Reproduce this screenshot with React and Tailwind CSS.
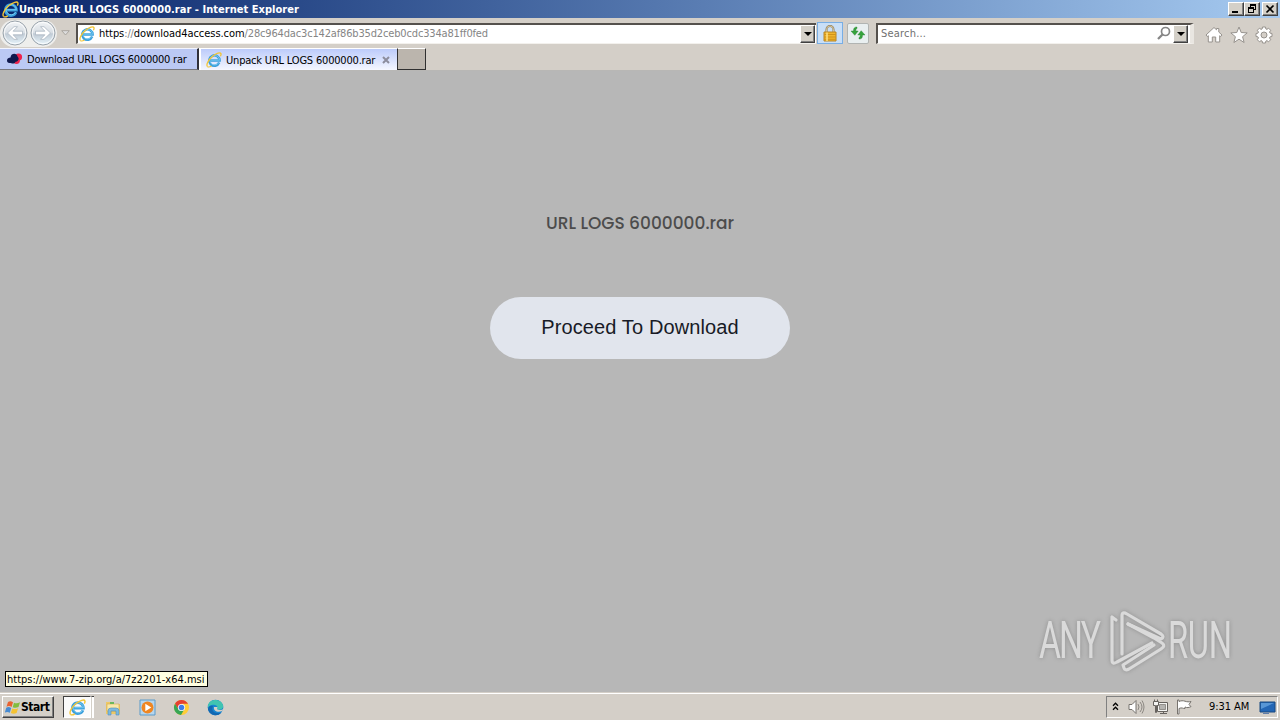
import { useId } from 'react';

const ui = "font-['Tahoma','DejaVu_Sans_Condensed','DejaVu_Sans',sans-serif]";
const raised = 'border border-t-white border-l-white border-r-[#404040] border-b-[#404040] bg-[#d4d0c8] shadow-[inset_-1px_-1px_0_#808080]';

function IeIcon({ size = 16 }) {
  return (
    <svg width={size} height={size} viewBox="0 0 16 16" fill="none" className="shrink-0">
      <path d="M13.2 10.6A5.2 5.2 0 1 1 13.6 8.6H4.5" stroke="#3b9fdc" strokeWidth="2.5" />
      <path d="M12.8 10.7A4.8 4.8 0 1 1 13.5 8.2H5" stroke="#7fd0f3" strokeWidth=".8" />
      <path d="M1.5 14.6C-.3 12.6 2.6 7.6 6.6 4.3 10.4 1.2 14.4 0 15 1.8c.2.7-.1 1.6-.6 2.5" stroke="#f3c535" strokeWidth="1.3" />
      <path d="M1.5 14.6c.9.8 2.5.3 4-.6" stroke="#f3c535" strokeWidth="1.2" />
    </svg>
  );
}

function NavButton({ back }) {
  const id = useId();
  return (
    <svg width="26" height="26" viewBox="0 0 26 26" className="shrink-0">
      <defs>
        <linearGradient id={id} x2="0" y2="1">
          <stop stopColor="#f3f5f7" />
          <stop offset=".48" stopColor="#d8dee4" />
          <stop offset=".54" stopColor="#c0cbd5" />
          <stop offset="1" stopColor="#e8f5fc" />
        </linearGradient>
      </defs>
      <circle cx="13" cy="13" r="12" fill={`url(#${id})`} stroke="#9ba4ac" />
      <circle cx="13" cy="13" r="10.7" fill="none" stroke="#fff" strokeOpacity=".8" />
      <path
        d="M5.5 13l6.5-6.3h3.5l-4.4 4.5h9.4v3.6h-9.4l4.4 4.5H12z"
        transform={back ? undefined : 'rotate(180 13 13)'}
        fill="#fff"
        stroke="#a3afbc"
        strokeWidth=".7"
      />
    </svg>
  );
}

function DropButton() {
  return (
    <div className={`flex h-[18px] w-[15px] shrink-0 items-center justify-center ${raised}`}>
      <svg width="8" height="4" viewBox="0 0 8 4"><path d="M0 0h8L4 4z" fill="#000" /></svg>
    </div>
  );
}

function WindowButton({ children }) {
  return (
    <div className={`flex h-[14px] w-4 items-center justify-center ${raised}`}>
      <svg width="12" height="10" viewBox="0 0 12 10" fill="none" stroke="#000" shapeRendering="crispEdges">
        {children}
      </svg>
    </div>
  );
}

function TitleBar() {
  return (
    <div className="flex h-[18px] items-center bg-gradient-to-r from-[#0a246a] to-[#a6caf0] px-[2px]">
      <IeIcon size={17} />
      <span className="w-[300px] whitespace-nowrap pt-px text-[11px] font-bold leading-[17px] tracking-[0.03px] text-white">
        Unpack URL LOGS 6000000.rar - Internet Explorer
      </span>
      <div className="ml-auto flex">
        <WindowButton><path d="M2 8h6" strokeWidth="2" /></WindowButton>
        <WindowButton>
          <path d="M4 1h6M4.5 1v3M9.5 1v5M8 5.5h2M2 4h6M4 .5h6M2 3.5h6M2.5 4v5M7.5 4v5M2 8.5h6" />
        </WindowButton>
        <div className="ml-[2px]">
          <WindowButton><path d="M2.5 1.5l7 7M9.5 1.5l-7 7" strokeWidth="1.7" shapeRendering="auto" /></WindowButton>
        </div>
      </div>
    </div>
  );
}

function AddressRow() {
  return (
    <div className="flex h-[30px] items-center bg-[#d4cfc8]">
      <div className="flex h-[27px] w-[57px] items-center gap-[2px] rounded-full bg-[#eeeeec] pl-[2px]">
        <NavButton back />
        <NavButton />
      </div>
      <svg width="9" height="6" viewBox="0 0 9 6" className="ml-1"><path d="M.7.7h7.6L4.5 5z" fill="#ddd" stroke="#aaa69f" /></svg>
      <div className="ml-[6px] flex h-[21px] w-[740px] items-center border-b border-l-2 border-t-2 border-[#55514d] border-b-[#f3f1ed] bg-white pl-px">
        <IeIcon size={16} />
        <span className="ml-1 whitespace-nowrap pt-px text-[11px] tracking-[-0.16px] text-[#858585]">
          <span className="tracking-[-0.05px] text-black">https</span>://<span className="tracking-[-0.05px] text-black">download4access.com</span>/28c964dac3c142af86b35d2ceb0cdc334a81ff0fed
        </span>
        <div className="ml-auto mr-px"><DropButton /></div>
      </div>
      <div className="ml-[1px] flex h-[22px] w-[26px] items-center justify-center border border-[#78aee5] bg-[#c9dff7]">
        <svg width="14" height="17" viewBox="0 0 14 17">
          <path d="M3.5 8V4.5a3.5 3.5 0 0 1 7 0V8" fill="none" stroke="#8e7b55" strokeWidth="2" />
          <path d="M3.5 8V4.5a3.5 3.5 0 0 1 7 0V8" fill="none" stroke="#e5d6ad" strokeWidth=".8" />
          <path d="M1 7h12v9H1z" fill="#f0b52d" stroke="#b88422" />
          <path d="M1.5 9.5h11M1.5 12h11M1.5 14.3h11" stroke="#c88914" strokeWidth=".8" />
          <path d="M4 7.5V16" stroke="#ffe183" strokeWidth="1.5" />
        </svg>
      </div>
      <div className="ml-1 flex h-[21px] w-[22px] items-center justify-center rounded-[2px] border border-[#b1b4b2] bg-[#e9eff0]">
        <svg width="16" height="14" viewBox="0 0 16 14" fill="#36a33c" stroke="#248130" strokeWidth=".4">
          <path d="M7 1C4.5 1 3.5 2 3.5 5H1l3.8 4.3L8.2 5H5.8c0-1.6.3-2.2 1.2-2.5zM9 13c2.5 0 3.5-1 3.5-4H15l-3.8-4.3L7.8 9h2.4c0 1.6-.3 2.2-1.2 2.5z" />
        </svg>
      </div>
      <div className="ml-[7px] flex h-[21px] w-[318px] items-center border-b border-l-2 border-r-4 border-t-2 border-[#55514d] border-b-[#f3f1ed] border-r-[#e9e6e1] bg-white pl-[3px]">
        <span className="pt-px text-[11px] tracking-[0.2px] text-[#707070]">Search...</span>
        <svg width="14" height="15" viewBox="0 0 14 15" fill="none" className="ml-auto mr-[2px]" stroke="#858585">
          <circle cx="8.5" cy="5.5" r="4" strokeWidth="1.7" />
          <path d="M5.5 8.5L1 13" strokeWidth="2.3" />
        </svg>
        <DropButton />
        <div className="w-[2px]" />
      </div>
      <div className="ml-[11px] flex gap-[7px] pt-1">
        <svg width="18" height="18" viewBox="0 0 18 18" fill="#fff" stroke="#96928d" strokeLinejoin="round">
          <path d="M1 9l8-7.5 2.5 2.3V2.5h2.3v3.6L17 9l-1.3 1.5-1-.8V16h-4v-5H7.3v5h-4V9.7l-1 .8z" />
        </svg>
        <svg width="18" height="18" viewBox="0 0 18 18" fill="#fff" stroke="#96928d" strokeLinejoin="round">
          <path d="M9 1l2.2 5.5 6 .4-4.6 3.8 1.5 5.8L9 13.2l-5.1 3.3 1.5-5.8L.8 6.9l6-.4z" />
        </svg>
        <svg width="18" height="18" viewBox="0 0 18 18" fill="#fff" stroke="#96928d" strokeLinejoin="round">
          <path fillRule="evenodd" d="M7.5 1h3l.4 2 1 .4 1.7-1.2 2.1 2.1-1.2 1.8.5 1 2 .4v3l-2 .4-.5 1 1.2 1.8-2.1 2.1-1.7-1.2-1 .4-.4 2h-3l-.4-2-1-.4-1.7 1.2-2.1-2.1 1.2-1.8-.5-1-2-.4v-3l2-.4.5-1-1.2-1.8 2.1-2.1 1.7 1.2 1-.4zM9 6a3 3 0 1 0 0 6 3 3 0 0 0 0-6z" />
        </svg>
      </div>
    </div>
  );
}

function Tabs() {
  return (
    <div className="flex h-[23px] border-b border-[#b8b7b5] bg-[#d4cfc8]">
      <div className="flex h-[22px] w-[199px] items-center border-b border-r-2 border-t border-b-[#77777d] border-r-[#303038] border-t-[#f3f5ff] bg-[#bbc9f4] pl-[6px] text-[11px]">
        <svg width="17" height="12" viewBox="0 0 17 12">
          <circle cx="12.5" cy="4" r="3.6" fill="#ed234b" />
          <circle cx="10.5" cy="7.5" r="3.4" fill="#ed234b" />
          <path d="M1 7.5C1 5 3 4.5 4.5 4.4 5-.1 11-.2 11.5 3.5 14 5.7 12 9 9.5 8.7 8 12 4.8 9.7 4 10 2 10.3 1 9 1 7.5z" fill="#10194d" />
        </svg>
        <span className="ml-1 whitespace-nowrap pt-[3px] tracking-[-0.24px]">Download URL LOGS 6000000 rar</span>
      </div>
      <div className="flex h-[22px] w-[198px] items-center border-l-2 border-t border-white bg-gradient-to-b from-[#bccbfa] to-[#f5f7ff] pl-[5px] text-[11px]">
        <IeIcon />
        <span className="ml-1 whitespace-nowrap pt-[3px] tracking-[-0.19px]">Unpack URL LOGS 6000000.rar</span>
        <svg width="8" height="8" viewBox="0 0 8 8" className="ml-auto mr-[7px]"><path d="M1 1l6 6M7 1L1 7" stroke="#8c8d9d" strokeWidth="2" /></svg>
      </div>
      <div className="h-[22px] w-[29px] border border-b-[#303030] border-l-[#303030] border-r-[#303030] border-t-white bg-[#bbb5ad]" />
    </div>
  );
}

function Watermark() {
  return (
    <svg width="208" height="66" viewBox="0 0 208 66" className="absolute bottom-[18px] right-[36px] overflow-visible drop-shadow-[0_0_2px_rgba(80,80,80,0.4)]">
      <g fill="#dadada" fontFamily="Roboto, sans-serif" fontSize="51" fontWeight="400">
        <text transform="translate(3 50) scale(.66 1)" textLength="94">ANY</text>
        <text transform="translate(132 50) scale(.64 1)" textLength="100">RUN</text>
      </g>
      <g fill="none" stroke="#dadada" strokeWidth="3.2" strokeLinejoin="round" strokeLinecap="round">
        <path d="M80 12l-4-3v43q0 5 5 2l35-19" />
        <path d="M86 46V8q0-5 5-2l34 20q4 3 0 5L92 16" />
        <path d="M88 60q1 3 5 1l32-20q5-3 1-6l-8-5-26-14M88 60l-1-3 31-20" />
      </g>
    </svg>
  );
}

function Page() {
  return (
    <main className="relative flex h-[621px] flex-col items-center bg-[#b7b7b7]">
      <h1 className="mt-[139px] whitespace-nowrap font-['Poppins','Inter',sans-serif] text-[17px] font-medium leading-[26px] text-[#4c4c4c]">
        URL LOGS 6000000.rar
      </h1>
      <button className="mt-[61px] h-[62px] w-[300px] rounded-full bg-[#e1e5ed] pb-[2px] font-['Liberation_Sans',sans-serif] text-[20px] tracking-[0.12px] text-[#181b26]">
        Proceed To Download
      </button>
      <Watermark />
      <div className="absolute bottom-[5px] left-[5px] h-4 w-[203px] whitespace-nowrap border border-black bg-[#ffffe1] pl-px text-[11px] leading-[15px]">
        https://www.7-zip.org/a/7z2201-x64.msi
      </div>
    </main>
  );
}

function StartButton() {
  return (
    <div className={`flex h-[22px] w-[52px] items-center pl-[2px] ${raised}`}>
      <svg width="16" height="15" viewBox="0 0 16 15">
        <path d="M3 2c2-1.3 3.4-.7 5 .2L6.6 7C5 6 3.5 5.7 1.5 6.8z" fill="#e96331" />
        <path d="M9 2.7c2 .8 3.6.8 6-.4l-1.5 4.8c-2 1-3.8 1-5.8.1z" fill="#83bd3f" />
        <path d="M1.2 7.8c2-1.2 3.4-.7 5 .2l-1.4 4.8c-1.7-1-3-1.3-5-.2z" fill="#478bd2" />
        <path d="M7.3 8.5c2 .8 3.6.8 5.8-.3l-1.5 4.7c-2 1-3.8 1-5.8.1z" fill="#f5c332" />
      </svg>
      <span className="text-[12px] font-bold tracking-[-0.45px]">Start</span>
    </div>
  );
}

function Tray() {
  return (
    <div className="ml-auto flex h-[22px] w-[172px] items-center border border-b-white border-l-[#808080] border-r-white border-t-[#808080] pl-[5px]">
      <svg width="7" height="9" viewBox="0 0 7 9" fill="none" stroke="#000" strokeWidth="1.3" className="mb-[2px]"><path d="M1 3.7l2.5-2.5L6 3.7M1 7.7l2.5-2.5L6 7.7" /></svg>
      <svg width="17" height="16" viewBox="0 0 17 16" fill="#fff" stroke="#77736e" className="ml-[9px]">
        <path d="M1 5.5h3l4-4v13l-4-4H1z" />
        <path d="M10 5q2 3 0 6M12 3q4 5 0 10M14 1.5q4 6.5 0 13" fill="none" strokeWidth=".8" />
      </svg>
      <svg width="17" height="16" viewBox="0 0 17 16" fill="#f4f4f2" stroke="#66625e" className="ml-[7px]">
        <path d="M5.5 3.5h10v9h-10zM8 14.5h7M11.5 12.5v2" />
        <path d="M7.5 5.5h6v5h-6z" fill="#b5b4b1" strokeWidth=".6" />
        <path d="M1.5 2.5h5v4h-2v7h-1v-7h-2zM2.5.5v2M5.5.5v2" />
      </svg>
      <svg width="17" height="16" viewBox="0 0 17 16" fill="#fff" stroke="#77736e" className="ml-[7px]">
        <path d="M1.5 1v14H3V9.5c3-1.5 4 .3 6 0V8c2 1 4 .6 6-.4L13 5.5l2-3c-2 .5-4 .4-6-.3-2-.7-4-.6-6 .3V1z" />
      </svg>
      <span className="ml-4 whitespace-nowrap pt-px text-[11px] tracking-[-0.05px]">9:31 AM</span>
      <svg width="17" height="15" viewBox="0 0 17 15" className="ml-auto mr-[1px] mt-px">
        <path d="M1 2h15v10H1z" fill="#2366b5" stroke="#194880" />
        <path d="M2 3h13L2 9z" fill="#5796d6" />
        <path d="M4 13.5h6" stroke="#5f7eaa" />
      </svg>
    </div>
  );
}

function Taskbar() {
  return (
    <div className="flex h-7 items-start border-t border-[#d4cfc8] bg-[#d4cfc8] px-[2px] pt-[3px] shadow-[inset_0_1px_0_#fff]">
      <StartButton />
      <div className="ml-[9px] flex h-[22px] w-7 items-center justify-center border border-b-white border-l-[#404040] border-r-white border-t-[#404040] bg-[#fafafa]">
        <IeIcon size={17} />
      </div>
      <div className="h-[22px] w-[3px] border-l border-t border-l-[#d4d0c8] border-t-[#404040] bg-white" />
      <div className="ml-[11px] flex h-[22px] items-center gap-[17px]">
        <svg width="17" height="17" viewBox="0 0 17 17">
          <path d="M1 3h6l1 2h7v10H1z" fill="#eec965" />
          <path d="M2 5h12v7H2z" fill="#f8e8a8" stroke="#d1aa55" strokeWidth=".6" />
          <path d="M5 3h4v2H5z" fill="#6bb85c" />
          <path d="M3 16v-4q0-3 3-3h5q3 0 3 3v4h-3v-4H6v4z" fill="#7cb9df" stroke="#538eb8" strokeWidth=".6" />
        </svg>
        <svg width="17" height="17" viewBox="0 0 17 17">
          <path d="M1 1h15v15H1z" fill="#b7d6ed" stroke="#5b9bca" />
          <circle cx="8.5" cy="8.5" r="6" fill="#ef8622" />
          <path d="M6.3 4.8l6 3.7-6 3.7z" fill="#fff" />
        </svg>
        <svg width="17" height="17" viewBox="0 0 17 17">
          <circle cx="8.5" cy="8.5" r="7.5" fill="#ffcd38" />
          <path d="M2 4.7A7.5 7.5 0 0 1 15 4.8H8.5L5.3 10.5z" fill="#e54132" />
          <path d="M2 4.7a7.5 7.5 0 0 0 6 11.3l3.4-5.8-5.8.4z" fill="#37a655" />
          <circle cx="8.5" cy="8.5" r="3.6" fill="#fff" />
          <circle cx="8.5" cy="8.5" r="2.8" fill="#3e7de8" />
        </svg>
        <svg width="17" height="17" viewBox="0 0 17 17">
          <circle cx="8.5" cy="8.5" r="7.8" fill="#1684d0" />
          <path d="M1 7C1.4-1.2 15.5-1 16.2 7.3c0 3.5-4.2 4-6.4 2.8 2-3.2-1.4-5-4.3-4.3C3 6.2 1.5 7.8 1 9z" fill="#40c4b1" />
          <path d="M6 7.3c-2.5 4.2 2 8.1 8.3 6.4A7.8 7.8 0 0 1 1 10.5C1 7.5 3.5 6 6 7.3z" fill="#1268b2" />
          <path d="M7 8c-1 4 4 6 8.3 4 .6-.6.9-1.4 1-2-2 1.8-5 1-6.3 0l.5-2z" fill="#d4d0c8" />
        </svg>
      </div>
      <Tray />
    </div>
  );
}

function App() {
  return (
    <div className={`flex h-[720px] w-[1280px] flex-col overflow-hidden text-black ${ui}`}>
      <TitleBar />
      <AddressRow />
      <Tabs />
      <Page />
      <Taskbar />
    </div>
  );
}

export default App;
